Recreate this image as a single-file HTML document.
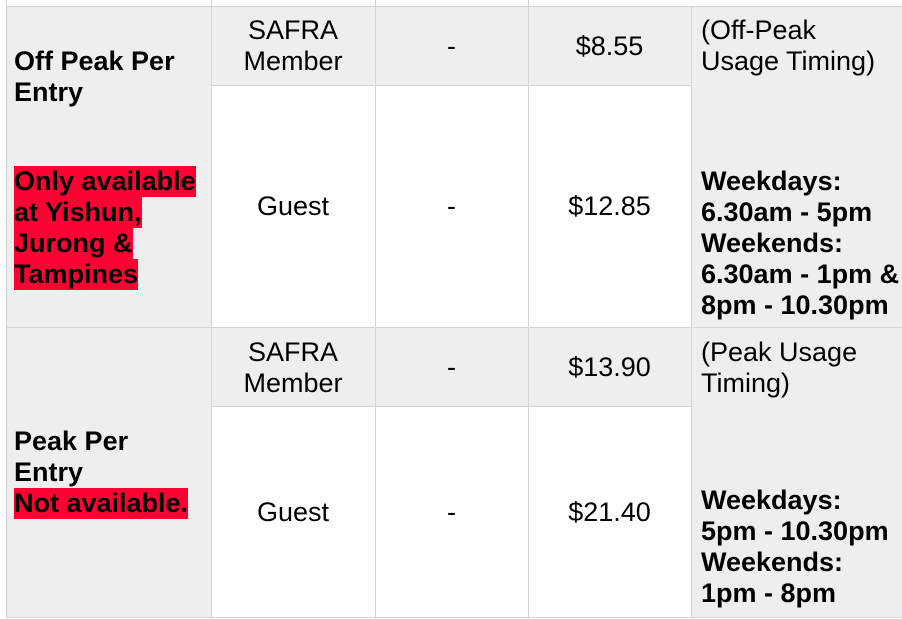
<!DOCTYPE html>
<html><head><meta charset="utf-8"><style>
body{margin:0;width:902px;height:619px;background:#fff;position:relative;overflow:hidden;font-family:"Liberation Sans",Arial,sans-serif;font-size:27px;line-height:31px;color:#000}
.r{position:absolute;background:#eee}
.h{position:absolute;height:1px;background:#d4d4d4}
.v{position:absolute;width:1px;background:#d4d4d4}
.t{position:absolute;white-space:nowrap}
.c{position:absolute;text-align:center}
b{font-weight:bold}
.red{background:#ff0033;display:inline-block;height:31px;vertical-align:top}
</style></head><body>
<div class="r" style="left:6px;top:6px;width:896px;height:79px"></div>
<div class="r" style="left:6px;top:85px;width:205px;height:242px"></div>
<div class="r" style="left:691px;top:85px;width:211px;height:242px"></div>
<div class="r" style="left:6px;top:327px;width:896px;height:79px"></div>
<div class="r" style="left:6px;top:406px;width:205px;height:211px"></div>
<div class="r" style="left:691px;top:406px;width:211px;height:211px"></div>

<div class="h" style="left:6px;top:6px;width:896px"></div>
<div class="h" style="left:211px;top:85px;width:480px"></div>
<div class="h" style="left:6px;top:327px;width:896px"></div>
<div class="h" style="left:211px;top:406px;width:480px"></div>
<div class="h" style="left:6px;top:617px;width:896px"></div>
<div class="v" style="left:6px;top:0;height:618px"></div>
<div class="v" style="left:211px;top:0;height:618px"></div>
<div class="v" style="left:375px;top:0;height:618px"></div>
<div class="v" style="left:528px;top:0;height:618px"></div>
<div class="v" style="left:691px;top:6px;height:612px"></div>

<div class="t" style="left:14px;top:46px"><b>Off Peak Per<br>Entry</b></div>
<div class="t" style="left:14px;top:166px"><b><span class="red">Only available</span><br><span class="red">at Yishun,</span><br><span class="red">Jurong &amp;</span><br><span class="red">Tampines</span></b></div>
<div class="t" style="left:14px;top:426px"><b>Peak Per<br>Entry<br><span class="red">Not available.</span></b></div>

<div class="c" style="left:211px;width:164px;top:15px">SAFRA<br>Member</div>
<div class="c" style="left:375px;width:153px;top:31px">-</div>
<div class="c" style="left:528px;width:163px;top:31px">$8.55</div>
<div class="c" style="left:211px;width:164px;top:191px">Guest</div>
<div class="c" style="left:375px;width:153px;top:191px">-</div>
<div class="c" style="left:528px;width:163px;top:191px">$12.85</div>
<div class="c" style="left:211px;width:164px;top:337px">SAFRA<br>Member</div>
<div class="c" style="left:375px;width:153px;top:352px">-</div>
<div class="c" style="left:528px;width:163px;top:352px">$13.90</div>
<div class="c" style="left:211px;width:164px;top:497px">Guest</div>
<div class="c" style="left:375px;width:153px;top:497px">-</div>
<div class="c" style="left:528px;width:163px;top:497px">$21.40</div>

<div class="t" style="left:701px;top:15px">(Off-Peak<br>Usage Timing)</div>
<div class="t" style="left:701px;top:166px"><b>Weekdays:<br>6.30am - 5pm<br>Weekends:<br>6.30am - 1pm &amp;<br>8pm - 10.30pm</b></div>
<div class="t" style="left:701px;top:337px">(Peak Usage<br>Timing)</div>
<div class="t" style="left:701px;top:485px"><b>Weekdays:<br>5pm - 10.30pm<br>Weekends:<br>1pm - 8pm</b></div>
</body></html>
